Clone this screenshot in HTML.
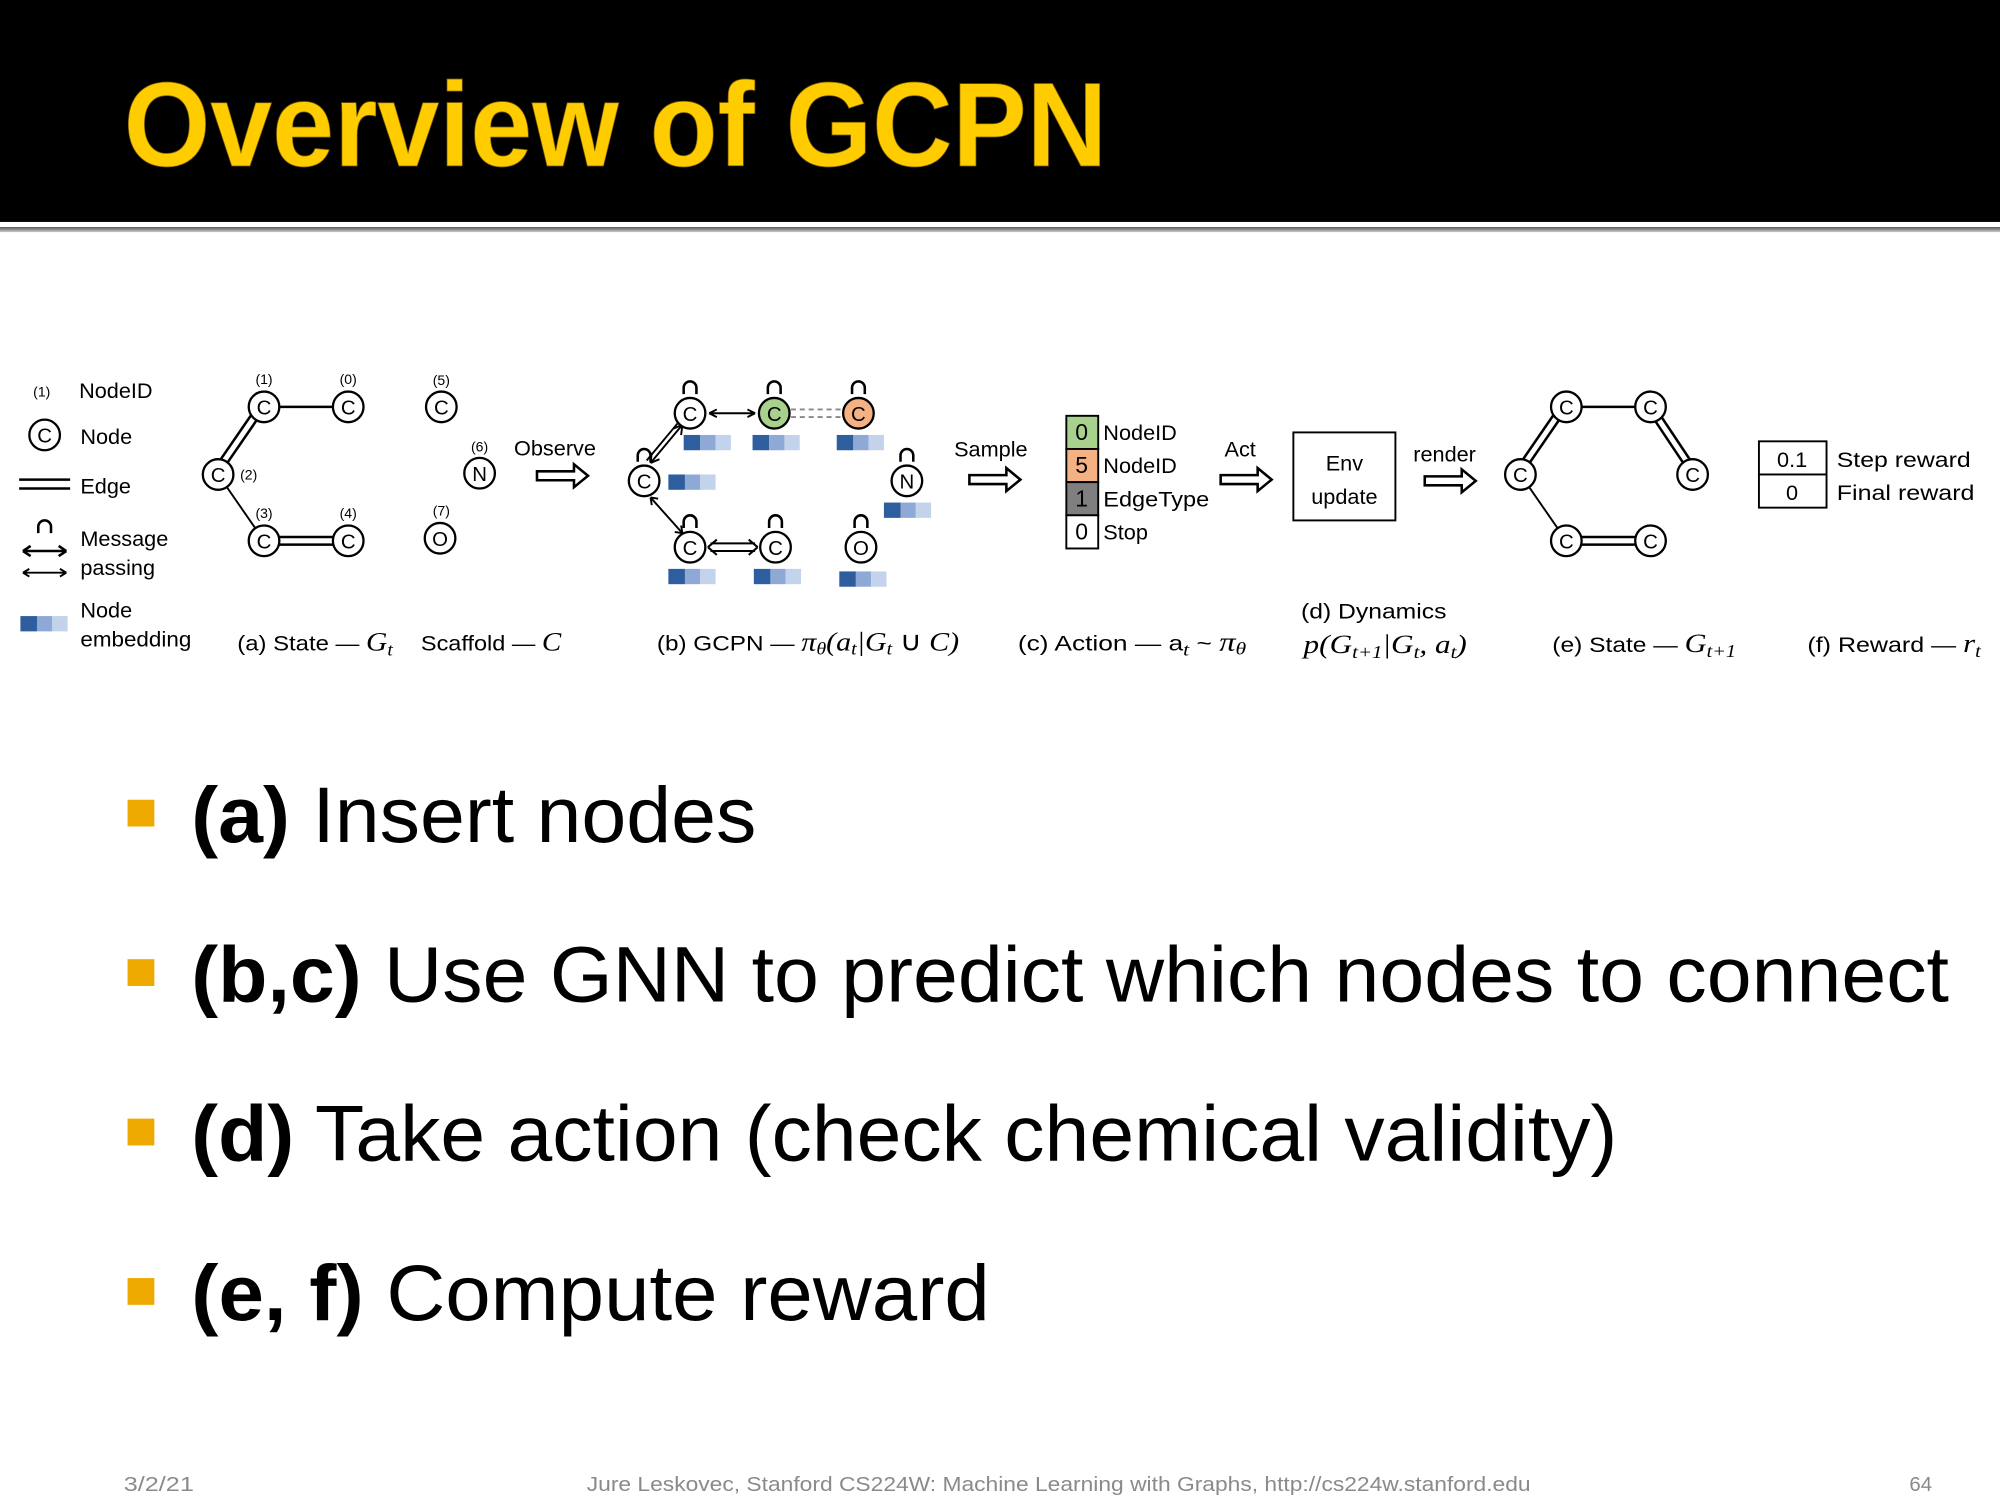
<!DOCTYPE html>
<html><head><meta charset="utf-8"><style>
html,body{margin:0;padding:0;background:#fff;width:2000px;height:1500px;overflow:hidden}
svg{display:block}
text{font-family:"Liberation Sans",sans-serif}
.s{font-size:17px}
.sm{font-size:11px}
.c{font-size:16px;text-anchor:middle}
.it{font-family:"Liberation Serif",serif;font-style:italic}
</style></head><body>
<svg width="2000" height="1500" viewBox="0 0 1568 1176" xmlns="http://www.w3.org/2000/svg">
<defs>
<linearGradient id="gl" x1="0" y1="0" x2="0" y2="1"><stop offset="0" stop-color="#555"/><stop offset="1" stop-color="#ccc"/></linearGradient>
<g id="harrow"><polygon points="0,-3.5 29,-3.5 29,-9 40,0 29,9 29,3.5 0,3.5" fill="#fff" stroke="#000" stroke-width="2"/></g>
<g id="emb"><rect x="0" y="0" width="13" height="12" fill="#2E5E9E"/><rect x="13" y="0" width="12" height="12" fill="#8EA9D6"/><rect x="25" y="0" width="12" height="12" fill="#C3D3EC"/></g>
<path id="loop" d="M-5,0 V-5 A5,5 0 0 1 5,-5 V0" fill="none" stroke="#000" stroke-width="2"/>
</defs>
<rect x="0" y="0" width="1568" height="174" fill="#000"/>
<rect x="0" y="178" width="1568" height="4" fill="url(#gl)"/>
<text x="97" y="130" font-size="94" font-weight="bold" fill="#FFCC00" textLength="771" lengthAdjust="spacingAndGlyphs" stroke="#7a5a00" stroke-width="0.6">Overview of GCPN</text>

<!-- legend -->
<text x="26" y="311" class="sm">(1)</text><text x="62" y="312" class="s">NodeID</text>
<circle cx="35" cy="341" r="12" fill="#fff" stroke="#000" stroke-width="1.8"/><text x="35" y="347" class="c">C</text>
<text x="63" y="348" class="s">Node</text>
<line x1="15" y1="376" x2="55" y2="376" stroke="#000" stroke-width="2"/><line x1="15" y1="383" x2="55" y2="383" stroke="#000" stroke-width="2"/>
<text x="63" y="387" class="s">Edge</text>
<use href="#loop" x="35" y="418"/>
<path d="M18,432 H52 M18,432 l6,-4 M18,432 l6,4 M52,432 l-6,-4 M52,432 l-6,4" stroke="#000" stroke-width="2" fill="none"/>
<path d="M18,449 H52 M18,449 l5,-3 M18,449 l5,3 M52,449 l-5,-3 M52,449 l-5,3" stroke="#000" stroke-width="1.5" fill="none"/>
<text x="63" y="428" class="s">Message</text><text x="63" y="451" class="s">passing</text>
<use href="#emb" x="16" y="483"/>
<text x="63" y="484" class="s">Node</text><text x="63" y="507" class="s" textLength="87" lengthAdjust="spacingAndGlyphs">embedding</text>

<!-- (a) -->
<g stroke="#000" stroke-width="2" fill="none">
<line x1="207" y1="319" x2="273" y2="319"/>
<line x1="169" y1="366" x2="202" y2="318"/><line x1="174" y1="369" x2="207" y2="321"/>
<line x1="171" y1="372" x2="207" y2="424" stroke-width="1.5"/>
<line x1="207" y1="421" x2="273" y2="421"/><line x1="207" y1="427" x2="273" y2="427"/>
</g>
<g fill="#fff" stroke="#000" stroke-width="1.8">
<circle cx="207" cy="319" r="12"/><circle cx="273" cy="319" r="12"/><circle cx="171" cy="372" r="12"/><circle cx="207" cy="424" r="12"/><circle cx="273" cy="424" r="12"/>
<circle cx="346" cy="319" r="12"/><circle cx="376" cy="371" r="12"/><circle cx="345" cy="422" r="12"/>
</g>
<g class="c"><text x="207" y="325" class="c">C</text><text x="273" y="325" class="c">C</text><text x="171" y="378" class="c">C</text><text x="207" y="430" class="c">C</text><text x="273" y="430" class="c">C</text>
<text x="346" y="325" class="c">C</text><text x="376" y="377" class="c">N</text><text x="345" y="428" class="c">O</text></g>
<g font-size="11" text-anchor="middle"><text x="207" y="301">(1)</text><text x="273" y="301">(0)</text><text x="195" y="376">(2)</text><text x="207" y="406">(3)</text><text x="273" y="406">(4)</text><text x="346" y="302">(5)</text><text x="376" y="354">(6)</text><text x="346" y="404">(7)</text></g>
<text x="186" y="510" class="s" textLength="122" lengthAdjust="spacingAndGlyphs">(a) State — <tspan class="it" font-size="21">G<tspan font-size="14" dy="4">t</tspan></tspan></text>
<text x="330" y="510" class="s" textLength="110" lengthAdjust="spacingAndGlyphs">Scaffold — <tspan class="it" font-size="21">C</tspan></text>
<text x="403" y="357" class="s">Observe</text>
<use href="#harrow" x="421" y="373"/>

<!-- (b) -->
<g stroke="#000" stroke-width="1.5" fill="none">
<path d="M556,324 H592 M556,324 l6,-3 M556,324 l6,3 M592,324 l-6,-3 M592,324 l-6,3"/>
<path d="M510,363 L535,333 M507,361 L532,331 M510,363 l1,-8 M510,363 l7,-3 M535,333 l-1,8 M535,333 l-7,3"/>
<path d="M510,390 L535,418 M510,390 l1,6 M510,390 l6,1 M535,418 l-1,-6 M535,418 l-6,-1"/>
<path d="M557,426 H592 M557,432 H592 M555,429 l7,-6 M555,429 l7,6 M594,429 l-7,-6 M594,429 l-7,6" stroke-width="1.6"/>
</g>
<g stroke="#888" stroke-width="1.5" stroke-dasharray="4,3"><line x1="620" y1="321" x2="661" y2="321"/><line x1="620" y1="327" x2="661" y2="327"/></g>
<g fill="#fff" stroke="#000" stroke-width="1.8">
<circle cx="541" cy="324" r="12"/><circle cx="607" cy="324" r="12" fill="#A9D18E"/><circle cx="673" cy="324" r="12" fill="#F4B183"/>
<circle cx="505" cy="377" r="12"/><circle cx="711" cy="377" r="12"/><circle cx="541" cy="429" r="12"/><circle cx="608" cy="429" r="12"/><circle cx="675" cy="429" r="12"/>
</g>
<text x="541" y="330" class="c">C</text><text x="607" y="330" class="c">C</text><text x="673" y="330" class="c">C</text><text x="505" y="383" class="c">C</text><text x="711" y="383" class="c">N</text><text x="541" y="435" class="c">C</text><text x="608" y="435" class="c">C</text><text x="675" y="435" class="c">O</text>
<use href="#loop" x="541" y="309"/><use href="#loop" x="607" y="309"/><use href="#loop" x="673" y="309"/><use href="#loop" x="505" y="362"/><use href="#loop" x="711" y="362"/><use href="#loop" x="541" y="414"/><use href="#loop" x="608" y="414"/><use href="#loop" x="675" y="414"/>
<use href="#emb" x="536" y="341"/><use href="#emb" x="590" y="341"/><use href="#emb" x="656" y="341"/><use href="#emb" x="524" y="372"/><use href="#emb" x="693" y="394"/><use href="#emb" x="524" y="446"/><use href="#emb" x="591" y="446"/><use href="#emb" x="658" y="448"/>
<text x="515" y="510" class="s" textLength="237" lengthAdjust="spacingAndGlyphs">(b) GCPN — <tspan class="it" font-size="21">π<tspan font-size="14" dy="3">θ</tspan><tspan dy="-3">(a</tspan><tspan font-size="14" dy="3">t</tspan><tspan dy="-3">|G</tspan><tspan font-size="14" dy="3">t</tspan><tspan dy="-3" font-style="normal"> ∪ </tspan>C)</tspan></text>
<text x="748" y="358" class="s">Sample</text>
<use href="#harrow" x="760" y="376"/>

<!-- (c) -->
<rect x="836" y="326" width="25" height="26" fill="#A9D18E" stroke="#000" stroke-width="1.5"/>
<rect x="836" y="352" width="25" height="26" fill="#F4B183" stroke="#000" stroke-width="1.5"/>
<rect x="836" y="378" width="25" height="26" fill="#7F7F7F" stroke="#000" stroke-width="1.5"/>
<rect x="836" y="404" width="25" height="26" fill="#fff" stroke="#000" stroke-width="1.5"/>
<g font-size="18" text-anchor="middle"><text x="848" y="345">0</text><text x="848" y="371">5</text><text x="848" y="397">1</text><text x="848" y="423">0</text></g>
<text x="865" y="345" class="s">NodeID</text><text x="865" y="371" class="s">NodeID</text><text x="865" y="397" class="s" textLength="83" lengthAdjust="spacingAndGlyphs">EdgeType</text><text x="865" y="423" class="s">Stop</text>
<text x="960" y="358" class="s">Act</text>
<use href="#harrow" x="957" y="376"/>
<rect x="1014" y="339" width="80" height="69" fill="#fff" stroke="#000" stroke-width="1.5"/>
<text x="1054" y="369" class="s" text-anchor="middle">Env</text><text x="1054" y="395" class="s" text-anchor="middle">update</text>
<text x="1108" y="362" class="s">render</text>
<use href="#harrow" x="1117" y="377"/>
<text x="798" y="510" class="s" textLength="179" lengthAdjust="spacingAndGlyphs">(c) Action — a<tspan class="it" font-size="14" dy="4">t</tspan><tspan dy="-4"> ~ </tspan><tspan class="it" font-size="21">π</tspan><tspan class="it" font-size="14" dy="3">θ</tspan></text>
<text x="1020" y="485" class="s" textLength="114" lengthAdjust="spacingAndGlyphs">(d) Dynamics</text>
<text x="1022" y="512" class="it" font-size="21" textLength="128" lengthAdjust="spacingAndGlyphs">p(G<tspan font-size="14" dy="4">t+1</tspan><tspan dy="-4">|G</tspan><tspan font-size="14" dy="4">t</tspan><tspan dy="-4">, a</tspan><tspan font-size="14" dy="4">t</tspan><tspan dy="-4">)</tspan></text>

<!-- (e) -->
<g stroke="#000" stroke-width="2" fill="none">
<line x1="1228" y1="319" x2="1294" y2="319"/>
<line x1="1190" y1="366" x2="1223" y2="318"/><line x1="1195" y1="369" x2="1228" y2="321"/>
<line x1="1296" y1="317" x2="1330" y2="368"/><line x1="1291" y1="320" x2="1325" y2="371"/>
<line x1="1192" y1="372" x2="1228" y2="424" stroke-width="1.5"/>
<line x1="1228" y1="421" x2="1294" y2="421"/><line x1="1228" y1="427" x2="1294" y2="427"/>
</g>
<g fill="#fff" stroke="#000" stroke-width="1.8">
<circle cx="1228" cy="319" r="12"/><circle cx="1294" cy="319" r="12"/><circle cx="1192" cy="372" r="12"/><circle cx="1327" cy="372" r="12"/><circle cx="1228" cy="424" r="12"/><circle cx="1294" cy="424" r="12"/>
</g>
<text x="1228" y="325" class="c">C</text><text x="1294" y="325" class="c">C</text><text x="1192" y="378" class="c">C</text><text x="1327" y="378" class="c">C</text><text x="1228" y="430" class="c">C</text><text x="1294" y="430" class="c">C</text>
<text x="1217" y="511" class="s" textLength="144" lengthAdjust="spacingAndGlyphs">(e) State — <tspan class="it" font-size="21">G<tspan font-size="14" dy="4">t+1</tspan></tspan></text>

<!-- (f) -->
<rect x="1379" y="346" width="53" height="26" fill="#fff" stroke="#000" stroke-width="1.5"/>
<rect x="1379" y="372" width="53" height="26" fill="#fff" stroke="#000" stroke-width="1.5"/>
<text x="1405" y="366" class="s" text-anchor="middle">0.1</text><text x="1405" y="392" class="s" text-anchor="middle">0</text>
<text x="1440" y="366" class="s" textLength="105" lengthAdjust="spacingAndGlyphs">Step reward</text><text x="1440" y="392" class="s" textLength="108" lengthAdjust="spacingAndGlyphs">Final reward</text>
<text x="1417" y="511" class="s" textLength="136" lengthAdjust="spacingAndGlyphs">(f) Reward — <tspan class="it" font-size="21">r<tspan font-size="14" dy="4">t</tspan></tspan></text>

<!-- bullets -->
<g fill="#EEAA00"><rect x="100" y="627" width="21" height="21"/><rect x="100" y="752" width="21" height="21"/><rect x="100" y="877" width="21" height="21"/><rect x="100" y="1002" width="21" height="21"/></g>
<g font-size="62">
<text x="150" y="660" textLength="443" lengthAdjust="spacingAndGlyphs"><tspan font-weight="bold">(a)</tspan> Insert nodes</text>
<text x="150" y="785" textLength="1378" lengthAdjust="spacingAndGlyphs"><tspan font-weight="bold">(b,c)</tspan> Use GNN to predict which nodes to connect</text>
<text x="150" y="910" textLength="1118" lengthAdjust="spacingAndGlyphs"><tspan font-weight="bold">(d)</tspan> Take action (check chemical validity)</text>
<text x="150" y="1035" textLength="626" lengthAdjust="spacingAndGlyphs"><tspan font-weight="bold">(e, f)</tspan> Compute reward</text>
</g>

<!-- footer -->
<g font-size="16" fill="#8a8a8a">
<text x="97" y="1169" textLength="55" lengthAdjust="spacingAndGlyphs">3/2/21</text>
<text x="460" y="1169" textLength="740" lengthAdjust="spacingAndGlyphs">Jure Leskovec, Stanford CS224W: Machine Learning with Graphs, http://cs224w.stanford.edu</text>
<text x="1497" y="1169">64</text>
</g>
</svg>
</body></html>
